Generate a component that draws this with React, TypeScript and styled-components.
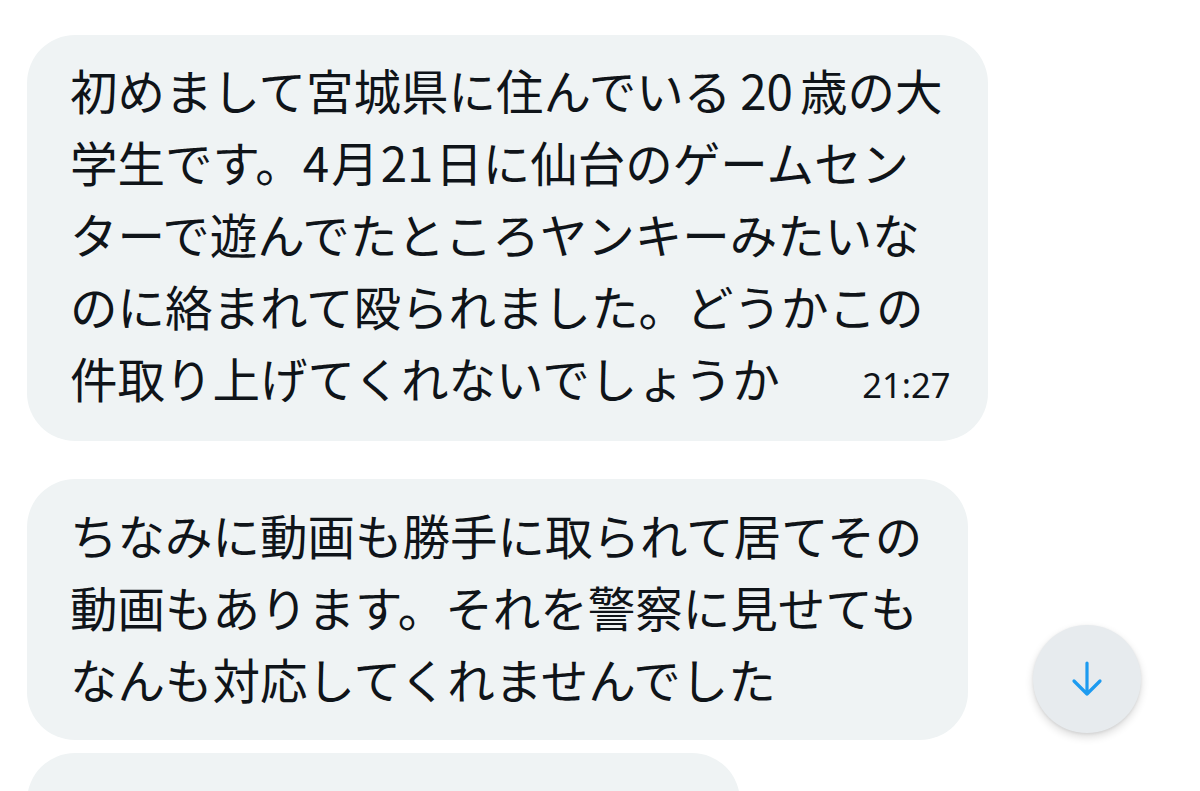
import React from 'react'
import styled, { createGlobalStyle } from 'styled-components'

const GlobalStyle = createGlobalStyle`
  html, body {
    margin: 0;
    padding: 0;
    background: #ffffff;
    overflow: hidden;
  }
  body {
    font-family: "Noto Sans CJK JP", "Noto Sans", sans-serif;
    color: #0f1419;
  }
`

const Screen = styled.div`
  position: relative;
  width: 1200px;
  height: 791px;
  overflow: hidden;
  background: #ffffff;
`

const Thread = styled.div`
  display: flex;
  flex-direction: column;
  align-items: flex-start;
  padding: 35px 0 0 27px;
`

const Bubble = styled.div<{ $gapAfter: number; $padTop?: number; $padBottom?: number; $minHeight?: number }>`
  background: #eff3f4;
  border-radius: 48px;
  padding: ${p => p.$padTop ?? 19}px 46px ${p => p.$padBottom ?? 27}px 43px;
  margin-bottom: ${p => p.$gapAfter}px;
  min-height: ${p => p.$minHeight ?? 0}px;
  box-sizing: border-box;
`

const Line = styled.div`
  font-size: 47.5px;
  line-height: 72px;
  height: 72px;
  white-space: nowrap;
`

const LastLine = styled(Line)`
  display: flex;
  align-items: baseline;
`

const Time = styled.span`
  margin-left: auto;
  padding-left: 40px;
  margin-right: -8px;
  font-family: "Noto Sans", "Liberation Sans", sans-serif;
  font-size: 34.5px;
  line-height: 72px;
  color: #0f1419;
`

const Digits = styled.span<{ $before?: number; $after?: number }>`
  margin-left: ${p => p.$before ?? 0}px;
  margin-right: ${p => p.$after ?? 0}px;
`

const ScrollButton = styled.button`
  position: absolute;
  left: 1033px;
  top: 625px;
  width: 108px;
  height: 108px;
  border: none;
  border-radius: 50%;
  background: #e7ebee;
  box-shadow: 0 4px 8px rgba(0, 0, 0, 0.14), 0 1px 3px rgba(0, 0, 0, 0.08);
  display: flex;
  align-items: center;
  justify-content: center;
  padding: 0;
  cursor: pointer;
`

const ArrowDown = () => (
  <svg width="36" height="38" viewBox="0 0 36 38" fill="none">
    <path
      d="M18 3 V34 M5 21 L18 34 L31 21"
      stroke="#1d9bf0"
      strokeWidth="3.2"
      strokeLinecap="round"
      strokeLinejoin="round"
    />
  </svg>
)

const App: React.FC = () => {
  return (
    <Screen>
      <GlobalStyle />
      <Thread>
        <Bubble $gapAfter={38}>
          <Line>初めまして宮城県に住んでいる<Digits $before={9} $after={7}>20</Digits>歳の大</Line>
          <Line>学生です。<Digits $after={2}>4</Digits>月<Digits $before={2} $after={2}>21</Digits>日に仙台のゲームセン</Line>
          <Line>ターで遊んでたところヤンキーみたいな</Line>
          <Line>のに絡まれて殴られました。どうかこの</Line>
          <LastLine>
            件取り上げてくれないでしょうか
            <Time>21:27</Time>
          </LastLine>
        </Bubble>

        <Bubble $gapAfter={13} $padTop={20} $padBottom={25}>
          <Line>ちなみに動画も勝手に取られて居てその</Line>
          <Line>動画もあります。それを警察に見せても</Line>
          <Line>なんも対応してくれませんでした</Line>
        </Bubble>

        <Bubble $gapAfter={0} $minHeight={120} style={{ width: 713 }} />
      </Thread>

      <ScrollButton aria-label="最新のメッセージへ">
        <ArrowDown />
      </ScrollButton>
    </Screen>
  )
}

export default App
